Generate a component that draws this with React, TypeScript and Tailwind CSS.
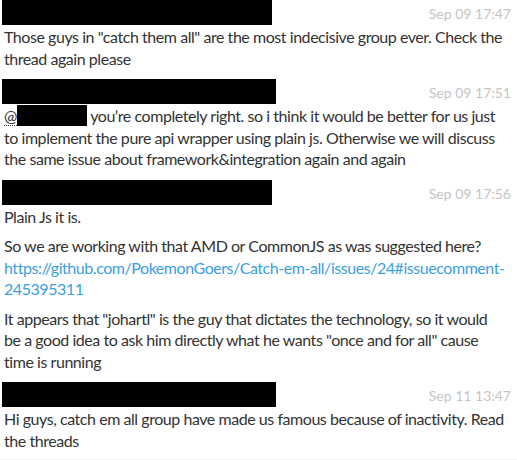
import React from 'react';

type Msg = {
  time: string;
  nameWidth: string;
  body: React.ReactNode;
};

function Redacted({ className }: { className: string }) {
  return <div className={`bg-black ${className}`} />;
}

const messages: Msg[] = [
  {
    time: 'Sep 09 17:47',
    nameWidth: 'w-[270px]',
    body: (
      <p>
        Those guys in "catch them all" are the most indecisive group ever. Check the
        <br />
        thread again please
      </p>
    ),
  },
  {
    time: 'Sep 09 17:51',
    nameWidth: 'w-[274px]',
    body: (
      <p>
        <span className="border-b border-dotted border-[#333]">
          @<span className="inline-block h-[21px] w-[70px] bg-black align-top" />
        </span>{' '}
        you’re completely right. so i think it would be better for us just
        <br />
        to implement the pure api wrapper using plain js. Otherwise we will discuss
        <br />
        the same issue about framework&amp;integration again and again
      </p>
    ),
  },
  {
    time: 'Sep 09 17:56',
    nameWidth: 'w-[270px]',
    body: (
      <div className="flex flex-col gap-2">
        <p>Plain Js it is.</p>
        <p>
          So we are working with that AMD or CommonJS as was suggested here?
          <br />
          <a className="text-[#3a9fe0]" href="#">
            <span className="whitespace-nowrap">
              https://github.com/PokemonGoers/Catch-em-all/issues/24#issuecomment-
            </span>
            <wbr />
            245395311
          </a>
        </p>
        <p>
          It appears that "johartl" is the guy that dictates the technology, so it would
          <br />
          be a good idea to ask him directly what he wants "once and for all" cause
          <br />
          time is running
        </p>
      </div>
    ),
  },
  {
    time: 'Sep 11 13:47',
    nameWidth: 'w-[274px]',
    body: (
      <p>
        Hi guys, catch em all group have made us famous because of inactivity. Read
        <br />
        the threads
      </p>
    ),
  },
];

export default function App() {
  return (
    <div className="h-[460px] w-[517px] overflow-hidden bg-white font-['Lato','Noto_Sans',sans-serif] text-[16px] leading-[21.5px] tracking-[-0.45px] text-[#333]">
      <div className="flex flex-col">
        {messages.map((m, i) => (
          <div key={i} className={`px-1 ${i === 0 ? 'pt-0' : 'pt-[10px]'}`}>
            <div className="flex items-end justify-between">
              <Redacted className={`-ml-[2px] h-[25px] ${m.nameWidth}`} />
              <span className="pr-[2px] pb-[2px] text-[14px] leading-[18px] tracking-normal text-[#c4c4c4]">
                {m.time}
              </span>
            </div>
            <div className="pt-[1px]">{m.body}</div>
          </div>
        ))}
        <div className="mt-[8px] h-[10px] bg-[#f6f6f6]" />
      </div>
    </div>
  );
}
